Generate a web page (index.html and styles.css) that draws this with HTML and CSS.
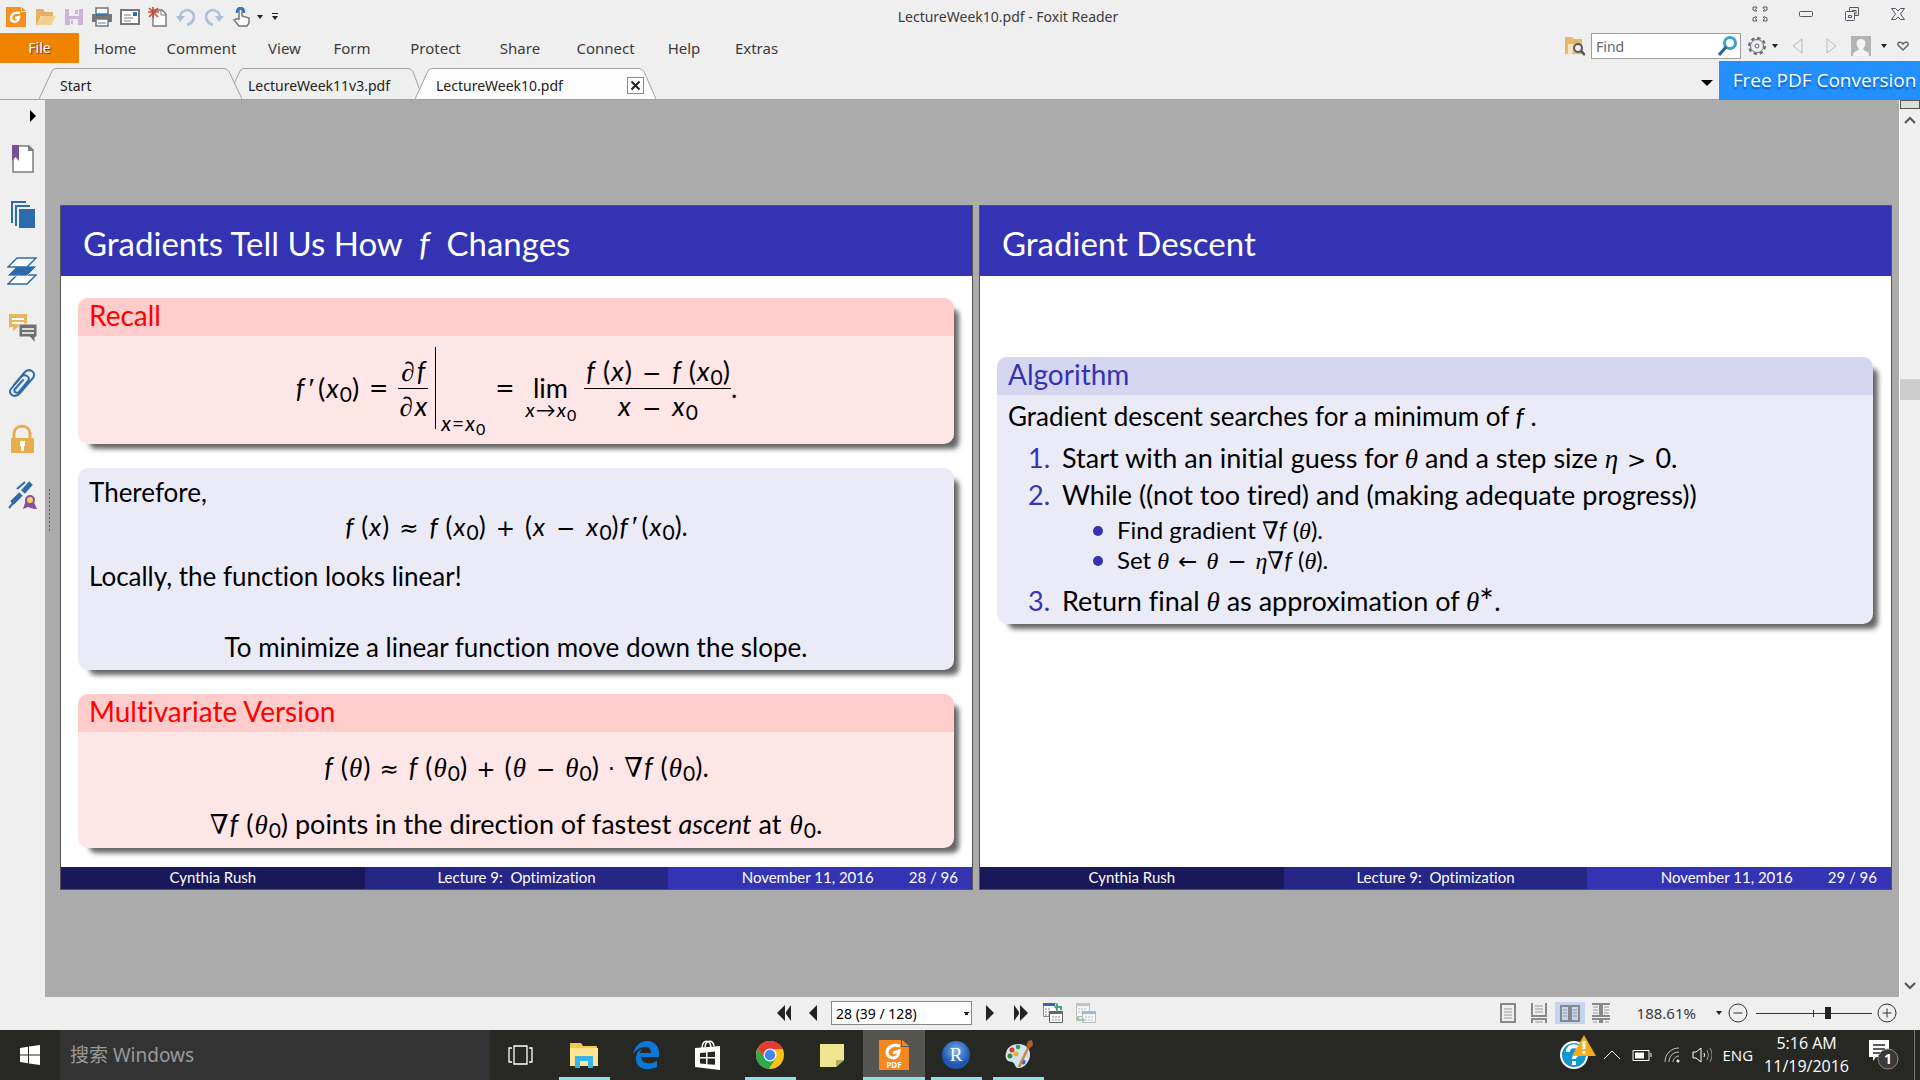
FILE: index.html
```html
<!DOCTYPE html>
<html lang="en">
<head>
<meta charset="utf-8">
<title>LectureWeek10.pdf - Foxit Reader</title>
<link rel="stylesheet" href="styles.css">
</head>
<body>
<div class="app">
  <header class="titlebar">
    <div class="quick">
      <svg class="ic20" viewBox="0 0 20 20"><path fill="#f78f1e" d="M0 0h15v5h5v15H0z"/><path fill="#f78f1e" d="M16 0l4 4h-4z"/><path d="M14 6c-4-1-8 0-9 4-1 5 5 6 7 3l1-3-4 1" fill="none" stroke="#fff" stroke-width="2.4"/></svg>
      <svg class="ic20" viewBox="0 0 20 20"><path fill="#e3b164" d="M0 2h7l2 3h8v4H5L1 18H0z"/><path fill="#f3cf8e" d="M6 9h14l-5 9H1z"/></svg>
      <svg class="ic20" viewBox="0 0 20 20"><path fill="#cbb5d6" d="M1 2h18v16H1z"/><path fill="#f0edf2" d="M5 2h10v7H5zM6 12h8v6H6z"/><path fill="#cbb5d6" d="M11 3h3v4h-3zM7 13h2v4H7z"/></svg>
      <svg class="ic20" viewBox="0 0 20 20"><path fill="#fff" stroke="#777" stroke-width="1.5" d="M4 1h12v6H4z"/><path fill="#777" d="M0 7h20v8H0z"/><path fill="#2f77b5" d="M4 7h12v2H4z"/><path fill="#fff" stroke="#777" stroke-width="1.5" d="M4 12h12v7H4z"/><path stroke="#4b8ac0" d="M6 16h8"/></svg>
      <svg class="ic20" viewBox="0 0 20 20"><path fill="#fff" stroke="#777" stroke-width="2" d="M1 3h18v14H1z"/><path stroke="#777" d="M4 8h7M4 11h9M4 14h7"/><path fill="#2f6fb0" d="M13 5h4v4h-4z"/></svg>
      <svg class="ic20" viewBox="0 0 20 20"><path fill="#fff" stroke="#777" stroke-width="1.4" d="M5 3h9l4 4v12H5z"/><path fill="none" stroke="#777" d="M13 3v5h5"/><path stroke="#cf4a36" stroke-width="1.6" d="M5 0v11M0 5h11M1 1l9 9M10 1l-9 9"/></svg>
      <svg class="ic20" viewBox="0 0 20 20"><path fill="none" stroke="#a8c1dc" stroke-width="2.6" d="M11 18c9-3 9-13 1-15-5 0-8 3-8 8"/><path fill="#a8c1dc" d="M0 9h9l-5 6z"/></svg>
      <svg class="ic20" viewBox="0 0 20 20"><path fill="none" stroke="#a8c1dc" stroke-width="2.6" d="M9 18C0 15 0 5 8 3c5 0 8 3 8 8"/><path fill="#a8c1dc" d="M11 9h9l-5 6z"/></svg>
      <svg class="ic20" viewBox="0 0 20 20"><path fill="#fff" stroke="#777" stroke-width="1.5" d="M7 12V3q1.500-2 3 0v6l7 2v5l-2 3H7l-5-6 2-1z"/><path fill="none" stroke="#2f77b5" stroke-width="2.500" d="M5 6q0-5 3.500-5T12 6"/></svg>
      <svg class="caret" viewBox="0 0 8 8"><path d="M1 2h6L4 6z"/></svg>
      <svg class="caret" viewBox="0 0 8 8"><path d="M1 0h6v1H1zM1 3h6L4 7z"/></svg>
    </div>
    <h1 class="wintitle">LectureWeek10.pdf - Foxit Reader</h1>
    <div class="winbtns">
      <button aria-label="Full screen"><svg viewBox="0 0 16 16"><path d="M1 1h4L3.500 3.500 5 5 3 5 1 4zM15 1h-4l1.500 2.500L11 5h2l2-1zM1 15h4l-1.500-2.500L5 11H3l-2 1zM15 15h-4l1.500-2.500L11 11h2l2 1z"/></svg></button>
      <button aria-label="Minimize"><svg viewBox="0 0 16 16"><rect x="1.500" y="5.500" width="13" height="5" rx="1"/></svg></button>
      <button aria-label="Restore"><svg viewBox="0 0 16 16"><path d="M5.500 5V1.500h9v8H11M8 4.500h4v4"/><rect x="1.500" y="5.500" width="9" height="9" rx="1"/><path d="M4.500 9.500h3v2h-3z"/></svg></button>
      <button aria-label="Close"><svg viewBox="0 0 16 16"><path d="M1.500 2.500h4L8 5l2.500-2.500h4L10.500 8l4 5.500h-4L8 11l-2.500 2.500h-4l4-5.500z"/></svg></button>
    </div>
  </header>

  <nav class="menubar">
    <div class="menus">
      <button class="file">File</button><button>Home</button><button>Comment</button><button>View</button><button>Form</button><button>Protect</button><button>Share</button><button>Connect</button><button>Help</button><button>Extras</button>
    </div>
    <div class="tools">
      <svg class="ic20" viewBox="0 0 20 20"><path fill="#ecb765" d="M0 1h7l2 2h8v15H0z"/><path fill="#fff" opacity=".6" d="M3 8h8L7 18H3z"/><circle cx="13" cy="12" r="4" fill="#eee" stroke="#555" stroke-width="2"/><path stroke="#555" stroke-width="2.500" d="M16 15l4 4"/></svg>
      <label class="find"><input type="text" placeholder="Find" aria-label="Find"><svg viewBox="0 0 20 20"><circle cx="12" cy="7" r="5.500" fill="#fff" stroke="#3fa0cd" stroke-width="3"/><path stroke="#2a5f9e" stroke-width="3" d="M8 11l-7 8"/></svg></label>
      <svg class="ic20" viewBox="0 0 20 20" fill="none" stroke="#667"><circle cx="10" cy="10" r="8" stroke-width="2" stroke-dasharray="3.500 2.780"/><circle cx="10" cy="10" r="6.500"/><circle cx="10" cy="10" r="2"/></svg>
      <svg class="caret" viewBox="0 0 8 8"><path d="M1 2h6L4 6z"/></svg>
      <svg class="tri" viewBox="0 0 12 18"><path d="M10 2v14L1 9z"/></svg>
      <svg class="tri next" viewBox="0 0 12 18"><path d="M2 2v14l9-7z"/></svg>
      <svg class="ic20" viewBox="0 0 20 20"><path fill="#b3b3b3" d="M0 0h20v20H0z"/><path fill="#f4f4f4" d="M10 3c6 0 5 7 2 10 1 2 5 2 6 5v2H2v-2c1-3 5-3 6-5-3-3-4-10 2-10z"/></svg>
      <svg class="caret user" viewBox="0 0 8 8"><path d="M1 2h6L4 6z"/></svg>
      <svg class="heart" viewBox="0 0 14 14"><path d="M7 11L2 6c-1-3 3-4 5-1 2-3 6-2 5 1z" fill="none" stroke="#667" stroke-width="1.500"/></svg>
    </div>
  </nav>

  <div class="tabbar">
    <button class="tab t1"><svg viewBox="0 0 203 31"><path d="M0 31L13 3q1-2.500 4-2.500h168q3 0 5 3L203 31"/></svg><span>Start</span></button>
    <button class="tab t2"><svg viewBox="0 0 196 31"><path d="M0 31L13 3q1-2.500 4-2.500h164q3 0 5 3L196 31"/></svg><span>LectureWeek11v3.pdf</span></button>
    <button class="tab t3"><svg viewBox="0 0 241 31"><path d="M0 31L13 3q1-2.500 4-2.500h207q3 0 5 3L241 31"/></svg><span>LectureWeek10.pdf</span><svg class="close" viewBox="0 0 17 17"><rect x=".5" y=".5" width="16" height="16" fill="#fff" stroke="#888"/><path d="M4.500 4.500l8 8M12.500 4.500l-8 8" stroke="#222" stroke-width="2"/></svg></button>
    <svg class="tabmenu" viewBox="0 0 12 8"><path d="M0 1h12L6 7z"/></svg>
    <a class="promo" href="#">Free PDF Conversion</a>
  </div>

  <main class="work">
    <aside class="side">
      <svg class="expand" viewBox="0 0 8 12"><path d="M1 0v12l6-6z"/></svg>
      <svg class="ic30" viewBox="0 0 30 30"><path fill="#fff" stroke="#7d7d7d" stroke-width="1.500" d="M6 2h16l4 4v22H6z"/><path fill="#7d7d7d" d="M21 1l6 6h-6z"/><path fill="#7b4f96" d="M5 1h7v16l-3.500-4L5 17z"/></svg>
      <svg class="ic30" viewBox="0 0 30 30"><path fill="#2c6cad" d="M4 1h15v2H6v20H4zM8 5h15v2H10v19H8zM12 9h16v19H12z"/></svg>
      <svg class="ic30" viewBox="0 0 30 30"><path fill="#fff" stroke="#2c6cad" stroke-width="1.500" d="M10 19h19l-9 9H1z"/><path fill="#2c6cad" stroke="#fff" stroke-width=".7" d="M10 10h20l-10 10H0z"/><path fill="#fff" stroke="#2c6cad" stroke-width="1.500" d="M10 2h19l-9 9H1z"/></svg>
      <svg class="ic30" viewBox="0 0 30 30"><path fill="#e9b55e" d="M2 2h18v13h-9l-5 4v-4H2z"/><path stroke="#fff" stroke-width="2" d="M5 7h12M5 11h12"/><path fill="#6f6f6f" stroke="#efefef" d="M12 12h18v13h-2v6l-5-6H12z"/><path stroke="#fff" stroke-width="1.500" d="M15 17h12M15 21h12"/></svg>
      <svg class="ic30" viewBox="0 0 30 30"><path fill="none" stroke="#2c6cad" stroke-width="2" stroke-linecap="round" d="M7 17L17 5c5-6 13-1 9 5L13 25c-5 6-13 1-9-4l10-12c4-4 10 0 7 4l-9 11c-3 2-6-1-4-3l8-9"/></svg>
      <svg class="ic30" viewBox="0 0 30 30"><path fill="none" stroke="#e8ad4f" stroke-width="3" d="M7 15V9c1-9 15-9 16 0v6"/><path fill="#e8ad4f" d="M4 14h23v15H4z"/><path fill="#fff" d="M13 17h5v5h-1v5h-3v-5h-1z"/></svg>
      <svg class="ic30" viewBox="0 0 30 30"><path stroke="#2c6cad" stroke-width="5" d="M5 23l9-9M16 12l8-9"/><path stroke="#2c6cad" stroke-width="2" d="M2 28l5-6M10 9l8-7"/><path fill="#8550a0" d="M19 20l-3 9 5-2 3 1 3 1h3l-4-9z"/><circle cx="23" cy="20" r="4" fill="#f7d154" stroke="#8550a0" stroke-width="2"/></svg>
    </aside>
    <div class="grip"></div>
    <section class="canvas">
      <article class="slide">
        <h2 class="slide-title">Gradients Tell Us How&nbsp; <i>f</i>&nbsp; Changes</h2>
        <div class="slide-body">
          <section class="block red">
            <h3>Recall</h3>
            <div class="limit">
              <span><i>f</i><span class="p">′</span>(<i>x</i><sub>0</sub>)</span>
              <span class="op">=</span>
              <span class="frac"><span><i class="g">∂</i><i>f</i></span><span><i class="g">∂</i><i>x</i></span></span>
              <span class="evalbar"></span><span class="evalat"><i>x</i>=<i>x</i><sub>0</sub></span>
              <span class="op">=</span>
              <span class="lim"><span>lim</span><small><i>x</i>→<i>x</i><sub>0</sub></small></span>
              <span class="frac"><span><i>f</i> (<i>x</i>)<b class="op">−</b><i>f</i> (<i>x</i><sub>0</sub>)</span><span><i>x</i><b class="op">−</b><i>x</i><sub>0</sub></span></span>
              <span>.</span>
            </div>
          </section>
          <section class="block blue plain">
            <p>Therefore,</p>
            <p class="mid"><i>f</i> (<i>x</i>)<b class="op">≈</b><i>f</i> (<i>x</i><sub>0</sub>)<b class="op">+</b>(<i>x</i><b class="op">−</b><i>x</i><sub>0</sub>)<i>f</i><span class="p">′</span>(<i>x</i><sub>0</sub>).</p>
            <p class="local">Locally, the function looks linear!</p>
            <p class="mid slope">To minimize a linear function move down the slope.</p>
          </section>
          <section class="block red multi">
            <h3>Multivariate Version</h3>
            <p class="mid"><i>f</i> (<i class="g">θ</i>)<b class="op">≈</b><i>f</i> (<i class="g">θ</i><sub>0</sub>)<b class="op">+</b>(<i class="g">θ</i><b class="op">−</b><i class="g">θ</i><sub>0</sub>)<b class="op dot">·</b><b class="n">∇</b><i>f</i> (<i class="g">θ</i><sub>0</sub>).</p>
            <p class="mid"><b class="n">∇</b><i>f</i> (<i class="g">θ</i><sub>0</sub>) points in the direction of fastest <em>ascent</em> at <i class="g">θ</i><sub>0</sub>.</p>
          </section>
        </div>
        <footer><span>Cynthia Rush</span><span>Lecture 9:&nbsp; Optimization</span><span class="last"><span>November 11, 2016</span><span>28 / 96</span></span></footer>
      </article>
      <article class="slide">
        <h2 class="slide-title">Gradient Descent</h2>
        <div class="slide-body second">
          <section class="block blue algo">
            <h3>Algorithm</h3>
            <p>Gradient descent searches for a minimum of <i>f</i> .</p>
            <ol>
              <li>Start with an initial guess for <i class="g">θ</i> and a step size <i class="g">η</i><b class="op">&gt;</b>0.</li>
              <li>While ((not too tired) and (making adequate progress))
                <ul>
                  <li>Find gradient <b class="n">∇</b><i>f</i> (<i class="g">θ</i>).</li>
                  <li>Set <i class="g">θ</i><b class="op">←</b><i class="g">θ</i><b class="op">−</b><i class="g">η</i><b class="n">∇</b><i>f</i> (<i class="g">θ</i>).</li>
                </ul>
              </li>
              <li>Return final <i class="g">θ</i> as approximation of <i class="g">θ</i><sup>∗</sup>.</li>
            </ol>
          </section>
        </div>
        <footer><span>Cynthia Rush</span><span>Lecture 9:&nbsp; Optimization</span><span class="last"><span>November 11, 2016</span><span>29 / 96</span></span></footer>
      </article>
    </section>
    <div class="scroll">
      <span class="split"></span>
      <svg viewBox="0 0 12 8"><path d="M1 7l5-5 5 5"/></svg>
      <div class="track"><span class="thumb"></span></div>
      <svg viewBox="0 0 12 8"><path d="M1 1l5 5 5-5"/></svg>
    </div>
  </main>

  <div class="status">
    <div class="pager">
      <svg class="w16" viewBox="0 0 16 16"><path d="M9 0v16L1 8zM15 0v16L10 9V7z"/></svg>
      <svg class="w10" viewBox="0 0 10 16"><path d="M9 0v16L1 8z"/></svg>
      <select aria-label="Page"><option>28 (39 / 128)</option></select>
      <svg class="w10" viewBox="0 0 10 16"><path d="M1 0v16l8-8z"/></svg>
      <svg class="w16" viewBox="0 0 16 16"><path d="M1 0v16l5-7V7zM7 0v16l8-8z"/></svg>
      <svg class="ic20" viewBox="0 0 20 20"><path fill="#fff" stroke="#888" d="M.5.500h13v13H.5z"/><path fill="#2c6cad" d="M0 0h12v3H0z"/><path stroke="#888" stroke-dasharray="2 1" d="M2 6h6M2 9h5M2 12h4"/><path fill="#fff" stroke="#666" d="M6.500 8.500h13v11h-13z"/><path fill="#666" d="M6 8h14v3H6z"/><path stroke="#888" stroke-dasharray="2 1" d="M9 14h9M9 17h9"/><path fill="#44a57c" d="M11 4l4-4v3h4v4h-2V5h-2v3z"/></svg>
      <svg class="ic20 dim" viewBox="0 0 20 20"><path fill="#fff" stroke="#888" d="M.5.500h13v13H.5z"/><path fill="#999" d="M0 0h14v3H0z"/><path stroke="#888" stroke-dasharray="2 1" d="M2 6h9M2 9h5"/><path fill="#fff" stroke="#888" d="M6.500 8.500h13v11h-13z"/><path fill="#4b86c4" d="M6 8h14v3H6z"/><path stroke="#888" stroke-dasharray="2 1" d="M9 14h9M9 17h9"/><path fill="#44a57c" d="M0 14h3v2h3v-3l3 4-3 3v-2H0z"/></svg>
    </div>
    <div class="view">
      <button aria-label="Single page"><svg viewBox="0 0 20 20"><path d="M3 1h14v18H3z"/><path class="ln" d="M6 6h8M6 9h8M6 12h8M6 15h8"/></svg></button>
      <button aria-label="Continuous"><svg viewBox="0 0 20 20"><path d="M3 0v13h14V0M3 20v-4h14v4"/><path class="ln" d="M6 3h8M6 6h8M6 9h8M6 19h8"/></svg></button>
      <button class="on" aria-label="Facing"><svg viewBox="0 0 20 20"><path d="M1 3h8v15H1zM11 3h8v15h-8z"/><path class="ln" d="M3 7h4M3 10h4M3 13h4M13 7h4M13 10h4M13 13h4"/></svg></button>
      <button aria-label="Continuous facing"><svg viewBox="0 0 20 20"><path d="M1 1h8v12H1M19 1h-8v12h8M1 16h8v4M19 16h-8v4"/><path class="ln" d="M2 4h5M2 7h5M2 10h5M13 4h5M13 7h5M13 10h5M2 19h4M14 19h4"/></svg></button>
      <output class="pct">188.61%</output>
      <svg class="caret" viewBox="0 0 8 8"><path d="M1 2h6L4 6z"/></svg>
      <button class="round" aria-label="Zoom out"><svg viewBox="0 0 20 20"><circle cx="10" cy="10" r="9"/><path d="M5.500 10h9"/></svg></button>
      <input class="zoom" type="range" min="0" max="100" value="63" aria-label="Zoom">
      <button class="round" aria-label="Zoom in"><svg viewBox="0 0 20 20"><circle cx="10" cy="10" r="9"/><path d="M5.500 10h9M10 5.500v9"/></svg></button>
    </div>
  </div>

  <div class="taskbar">
    <button class="start" aria-label="Start"><svg viewBox="0 0 20 20"><path fill="#fff" d="M0 3l8-1.200V9.500H0zM9 1.600L20 0v9.500H9zM0 10.500h8v7.700L0 17zM9 10.500h11V20L9 18.400z"/></svg></button>
    <input class="search" type="text" placeholder="搜索 Windows" aria-label="Search">
    <div class="apps">
      <button aria-label="Task view"><svg viewBox="0 0 30 30" fill="none" stroke="#fff" stroke-width="1.300"><path d="M7 6h13v18H7zM5 8H2v14h3M22 8h3v14h-3"/></svg></button>
      <button class="run" aria-label="File Explorer"><svg viewBox="0 0 30 30"><path fill="#f4c84a" d="M1 3h11l2 3h14v20H1z"/><path fill="#ffe592" d="M1 8h28v18H1z"/><path fill="#37b3e6" d="M6 28V16h18v12h-5v-7h-8v7z"/></svg></button>
      <button aria-label="Edge"><svg viewBox="0 0 30 30"><path fill="#0a78d6" d="M2 14C4 5 10 1 16 1c8 0 12 6 12 12v4H10c1 7 9 8 16 4v6C15 32 4 28 5 18c0-5 3-8 6-9-1 1-2 3-2 4h11C20 4 9 5 2 14z"/></svg></button>
      <button aria-label="Store"><svg viewBox="0 0 30 30"><path fill="none" stroke="#fff" stroke-width="1.500" d="M9 9c0-10 8-10 9-2M12 7c1-8 8-7 9-1"/><path fill="#fff" d="M2 8l25-2v24L2 27z"/><path fill="#272824" d="M7 13l6-.6V17H7zM14.500 12.200L22 11.500V17h-7.500zM7 18.500h6V24l-6-.5zM14.500 18.500H22v6.300l-7.500-.6z"/></svg></button>
      <button class="run" aria-label="Chrome"><svg viewBox="0 0 30 30"><circle cx="15" cy="15" r="14" fill="#fbc116"/><path fill="#e33b2e" d="M15 15L2.900 8A14 14 0 0 1 27 8l-12 1z"/><path fill="#2da94f" d="M2.900 8a14 14 0 0 0 11 21l7-11-6-1-6 1z"/><path fill="#e33b2e" d="M15 9h12.600A14 14 0 0 0 2.900 8l6 10z"/><circle cx="15" cy="15" r="6.500" fill="#fff"/><circle cx="15" cy="15" r="5.200" fill="#4285f4"/></svg></button>
      <button aria-label="Sticky Notes"><svg viewBox="0 0 30 30"><path fill="#efe48f" d="M3 4h24v16l-8 7H3z"/><path fill="#b5aa5b" d="M19 27v-7h8z"/></svg></button>
      <button class="run active" aria-label="Foxit Reader"><svg viewBox="0 0 30 30"><path fill="#f6881f" d="M0 0h22v7h8v23H0z"/><path fill="#f6881f" d="M23 0l7 6h-7z"/><path fill="none" stroke="#fff" stroke-width="3" d="M21 6c-6-2-12 0-13 6 0 6 8 8 11 3l1-4-6 2"/><text x="15" y="28" text-anchor="middle" class="pdf">PDF</text></svg></button>
      <button class="run" aria-label="R"><svg viewBox="0 0 30 30"><defs><radialGradient id="rg" cx=".5" cy=".35"><stop offset="0" stop-color="#7db2ee"/><stop offset="1" stop-color="#1d57b0"/></radialGradient></defs><circle cx="15" cy="15" r="14" fill="url(#rg)"/><text x="15" y="21" text-anchor="middle" class="rr">R</text></svg></button>
      <button class="run" aria-label="Paint"><svg viewBox="0 0 30 30"><path fill="#cfe4f0" d="M4 10C8 3 20 2 25 8c5 7 0 18-8 20-6 1-4-5-8-6-6 0-8-5-5-12z"/><circle cx="9" cy="10" r="2.500" fill="#d0392b"/><circle cx="15" cy="7" r="2.300" fill="#3e9b44"/><circle cx="7" cy="16" r="2.500" fill="#2f8b3a"/><circle cx="13" cy="14" r="2.500" fill="#e6b422"/><circle cx="20" cy="22" r="2.500" fill="#2e6fc4"/><path stroke="#c98443" stroke-width="2.500" d="M16 27l9-19"/><path fill="#a5622c" d="M23 7l2-6 4-1 1 5-4 4z"/></svg></button>
    </div>
    <div class="tray">
      <svg class="help" viewBox="0 0 36 36"><circle cx="14" cy="21" r="13" fill="#1295d3" stroke="#fff" stroke-width="2"/><path fill="none" stroke="#fff" stroke-width="4" d="M8 18c0-8 12-7 12-1 0 4-6 3-6 8M14 27v4"/><path fill="#f5ab1b" d="M24 1l12 21H12z"/><path stroke="#fff" stroke-width="3" d="M24 7v8M24 17v3"/></svg>
      <svg class="t18" viewBox="0 0 18 18"><path d="M1 13l8-8 8 8"/></svg>
      <svg class="t20" viewBox="0 0 20 18"><path d="M1 4.500h16v10H1zM19 7v4"/><path fill="#fff" stroke="none" d="M3 6.500h9v6H3z"/></svg>
      <svg class="t18" viewBox="0 0 18 18"><path d="M2 16C2 8 8 2 16 2M6 16c0-6 4-10 10-10M10 16c0-3 3-6 6-6" opacity=".7"/><circle cx="15" cy="15" r="1.500" fill="#fff" stroke="none"/></svg>
      <svg class="t20" viewBox="0 0 20 18"><path d="M1 6h3l5-4v14l-5-4H1z"/><path d="M12 7q1 2 0 4"/><path opacity=".5" d="M15 4q3 5 0 10M18 2q4 7 0 14"/></svg>
      <span class="lang">ENG</span>
      <time class="clock"><span>5:16 AM</span><span>11/19/2016</span></time>
      <svg class="note" viewBox="0 0 32 32"><path fill="#fff" d="M1 1h20v17H8l-3 4v-4H1z"/><path stroke="#272824" stroke-width="1.500" d="M5 6h12M5 10h12M5 14h8"/><circle cx="20" cy="20" r="10" fill="#3a3b38" stroke="#888"/><text x="20" y="25" text-anchor="middle" class="one">1</text></svg>
      <span class="peek"></span>
    </div>
  </div>
</div>
</body>
</html>
```
FILE: styles.css
```css
* { box-sizing: border-box; margin: 0; padding: 0; }
body { font-family: "Noto Sans", "Noto Sans CJK SC", sans-serif; font-size: 15px; color: #3b3b3b; background: #efefef; }
button { font: inherit; color: inherit; background: none; border: 0; }
svg { display: block; flex: none; }
.app { min-height: 100vh; display: grid; grid-template-rows: 33px 28px 39px 1fr 33px 50px; }
.ic20 { width: 20px; height: 20px; }
.ic30 { width: 30px; height: 30px; }
.caret { width: 8px; height: 8px; fill: #222; }

.titlebar { display: grid; grid-template-columns: 1fr auto 1fr; align-items: center; padding: 0 14px 6px 6px; }
.quick { display: flex; gap: 8px; align-items: center; padding-top: 7px; }
.quick .ic20:first-child { margin-right: 2px; }
.quick .caret { margin-left: -4px; }
.quick .caret + .caret { margin-left: -1px; }
.wintitle { font-size: 14px; line-height: 20px; font-weight: 400; padding: 6px 0 0 104px; }
.winbtns { display: flex; gap: 30px; justify-content: flex-end; }
.winbtns svg { width: 16px; height: 16px; fill: none; stroke: #556; stroke-width: 1; }

.menubar { display: flex; justify-content: space-between; }
.menus { display: grid; grid-template-columns: 79px 72px 101px 65px 70px 97px 72px 99px 58px 87px; line-height: 30px; }
.file { background: #f08300; color: #fff; font-size: 14px; line-height: 28px; text-shadow: 1px 1px 1px #633; }
.tools { display: flex; align-items: center; gap: 6px; padding: 0 10px 2px 0; }
.tools .caret { margin: 0 3px 0 -2px; }
.tools .user { margin: 0 0 0 3px; }
.find { display: flex; align-items: center; width: 150px; height: 26px; border: 1px solid #a0a0a0; background: #fff; padding: 0 2px 0 4px; }
.find input { flex: 1; min-width: 0; border: 0; font: inherit; font-size: 14px; background: none; }
.find svg { width: 20px; height: 20px; }
.find input::placeholder { color: #666; opacity: 1; }
.tri { width: 12px; height: 18px; fill: none; stroke: #bbb; margin-left: 4px; }
.next { margin: 0 8px 0 15px; }
.heart { width: 14px; height: 14px; margin-left: 2px; }

.tabbar { display: flex; align-items: flex-end; border-bottom: 1px solid #a0a0a0; padding-left: 39px; color: #222; }
.tab { position: relative; height: 31px; display: flex; align-items: center; font-size: 14px; text-align: left; padding-left: 21px; }
.tab span { position: relative; padding-top: 3px; }
.tab svg:first-child { position: absolute; inset: 0; width: 100%; height: 100%; fill: #efefef; stroke: #a0a0a0; }
.t1 { width: 203px; z-index: 2; }
.t2 { width: 196px; margin-left: -15px; z-index: 1; }
.t3 { width: 241px; margin-left: -8px; z-index: 3; }
.tab.t3 svg:first-child { fill: #fdfdfd; }
.close { position: relative; width: 17px; height: 17px; margin: 3px 12px 0 auto; }
.tabmenu { width: 12px; height: 8px; margin: 0 6px 12px auto; }
.promo { align-self: stretch; width: 201px; background: #2490ff; color: #fff; font-family: "Open Sans", sans-serif; font-size: 19px; line-height: 39px; text-align: center; text-decoration: none; white-space: nowrap; text-shadow: 0 2px 2px #05a; padding-left: 10px; margin-bottom: -1px; }

.work { display: flex; background: #ababab; position: relative; }
.side { width: 45px; background: #efefef; display: flex; flex-direction: column; align-items: center; gap: 26px; padding: 10px 2px 0 0; }
.expand { width: 8px; height: 12px; margin: 0 0 -4px 22px; }
.grip { width: 4px; height: 44px; margin: 388px 0 0 3px; background: radial-gradient(circle, #666 1px, transparent 1px) 0 0 / 3px 4px; }
.canvas { flex: 1; display: flex; align-items: center; gap: 6px; padding: 0 7px 2px 8px; }
.scroll { width: 21px; background: #efefef; border-left: 1px solid #fff; display: flex; flex-direction: column; align-items: center; }
.scroll svg { width: 12px; height: 8px; fill: none; stroke: #555; stroke-width: 2; margin: 7px 0; }
.split { align-self: stretch; height: 9px; border: 1px solid #555; background: #ddd; }
.track { flex: 1; align-self: stretch; padding-top: 248px; }
.thumb { display: block; height: 21px; background: #cdcdcd; }

.slide { flex: 1; aspect-ratio: 4 / 3; background: #fff; border: 1px solid #555; display: flex; flex-direction: column; font-family: Lato, "Noto Sans", sans-serif; font-size: 27px; line-height: 34px; font-variant-ligatures: none; color: #000; white-space: nowrap; }
.slide-title { background: #3333b3; color: #fff; font-weight: 400; font-size: 33px; line-height: 66px; padding: 4px 0 0 22px; }
.slide-body { flex: 1; padding: 22px 18px 0 17px; display: flex; flex-direction: column; gap: 24px; }
.second { padding-top: 81px; }
.block { border-radius: 10px; box-shadow: 8px 8px 5px -3px #666; }
.block h3 { font-size: 28px; line-height: 35px; font-weight: 400; padding: 0 11px 3px; border-radius: 10px 10px 0 0; }
.block p { padding: 0 11px; }
.plain, .algo > p { font-size: 26px; }
.red { background: #ffe6e6; }
.red h3 { background: #ffcccc; color: #f00; }
.blue { background: #ebebf7; }
.blue h3 { background: #d6d6f0; color: #3333b3; }
.block .mid { text-align: center; padding: 0; }
.plain { padding: 7px 0 6px; }
.local { margin-top: 16px; }
.slope { margin-top: 37px; }
.multi { padding-bottom: 7px; }
.multi .mid { margin-top: 18px; }
.multi .mid + .mid { margin-top: 23px; }
.algo h3 { margin-bottom: 4px; }
.algo { padding-bottom: 6px; }

.mid i, .frac i, .limit i { margin: 0 1px; }
sub { font-size: 21px; line-height: 1px; vertical-align: -4px; }
sup { font-size: 18px; line-height: 1px; vertical-align: 12px; }
.g { font-family: "Liberation Serif", serif; line-height: 1px; }
.n { font-family: "DejaVu Serif", serif; font-weight: 400; line-height: 1px; }
.p { font-family: "Liberation Serif", serif; font-size: 30px; line-height: 1px; margin: 0 3px; }
.op { font-family: "DejaVu Sans", sans-serif; font-weight: 400; font-size: 23px; line-height: 1px; margin: 0 10px; }
li .op { margin: 0 9px; }
.dot { margin: 0 8px; }
.multi .op { margin: 0 9px; }
.limit { display: flex; align-items: center; justify-content: center; height: 108px; padding-bottom: 4px; }
.frac { display: flex; flex-direction: column; text-align: center; line-height: 34px; }
.frac > :first-child { border-bottom: 1px solid #000; padding: 0 1px; }
.evalbar { width: 1px; height: 82px; background: #000; margin: 0 4px 0 7px; }
.evalat { align-self: flex-end; font-size: 21px; line-height: 28px; margin-bottom: 3px; }
.evalat sub, .lim sub { font-size: 16px; }
.lim { display: flex; flex-direction: column; align-items: center; padding: 16px 8px 0 0; line-height: 26px; }
.lim small { font-size: 20px; line-height: 16px; }

ol { list-style: none; counter-reset: n; margin-top: 8px; }
ol > li { counter-increment: n; padding-left: 65px; margin-bottom: 3px; }
ol > li::before { content: counter(n) "."; color: #3333b3; display: inline-block; width: 34px; margin-left: -34px; }
ul { list-style: none; margin: 3px 0 9px; font-size: 24px; line-height: 30px; }
ul li { padding-left: 55px; }
ul li::before { content: ""; display: inline-block; width: 10px; height: 10px; border-radius: 5px; background: #3333b3; margin: 0 14px 3px -24px; }
ol > li:last-child { margin-bottom: 0; }

footer { display: grid; grid-template-columns: 1fr 1fr 1fr; height: 22px; font-size: 15px; line-height: 20px; text-align: center; color: #fff; background: #3333b3; }
footer > :first-child { background: #191959; }
footer > :nth-child(2) { background: #262686; }
.last { display: flex; justify-content: flex-end; gap: 35px; padding-right: 14px; }

.status { display: grid; grid-template-columns: 1fr auto 1fr; align-items: center; padding: 0 48px 1px 0; }
.pager { grid-column: 2; display: flex; align-items: center; gap: 13px; }
.w16 { width: 16px; height: 16px; }
.w10 { width: 10px; height: 16px; }
.w16, .w10 { fill: #222; }
.w16:first-child { margin-right: 3px; }
.pager .w10 + .w16 { margin: 0 1px 0 5px; }
.pager select { width: 141px; height: 24px; border: 1px solid #888; font: inherit; font-size: 14px; color: #000; appearance: none; padding: 0 4px; background: linear-gradient(#222, #222) 132px 10px / 5px 1px no-repeat, linear-gradient(#222, #222) 133px 11px / 3px 2px no-repeat, #fff; }
.dim { opacity: .5; }
.view { display: flex; align-items: center; justify-content: flex-end; margin-right: -25px; }
.view button { width: 30px; height: 22px; display: grid; place-items: center; margin-right: 1px; }
.view button svg { width: 20px; height: 20px; fill: none; stroke: #888; stroke-width: 2; }
.view button .ln { stroke: #999; stroke-width: 1; }
.view .on { background: #c3d5f2; }
.pct { font-size: 15px; padding: 0 19px 0 20px; }
.view .round { width: 20px; margin: 0 0 0 5px; }
.view .round svg { stroke: #333; stroke-width: 1; }
.zoom { appearance: none; width: 116px; height: 20px; margin: 0 0 0 8px; background: linear-gradient(#333, #333) 0 10px / 116px 1px no-repeat, linear-gradient(#333, #333) 57px 7px / 1px 7px no-repeat; }
.zoom::-webkit-slider-thumb { appearance: none; width: 6px; height: 12px; background: #222; }

.taskbar { background: #272824; color: #fff; display: flex; }
.start { width: 60px; padding-left: 20px; }
.start svg { width: 20px; height: 20px; }
.search { width: 430px; border: 0; background: #333; font: inherit; font-size: 19px; padding: 0 10px; }
.search::placeholder { color: #9a9a9a; opacity: 1; }
.apps { display: flex; padding-left: 1px; }
.apps button { width: 62px; padding: 0 5px; }
.apps svg { width: 30px; height: 30px; margin: 0 auto; }
.run { background: linear-gradient(#8be3ea, #8be3ea) 50% 100% / 51px 3px no-repeat; }
.apps .active { background: linear-gradient(#8be3ea, #8be3ea) 50% 100% / 62px 3px no-repeat, #555651; }
.pdf { font-size: 8px; font-weight: 700; fill: #fff; }
.rr { font-family: "Liberation Serif", serif; font-size: 19px; fill: #fff; }
.tray { margin-left: auto; display: flex; align-items: center; gap: 11px; }
.help { width: 36px; height: 36px; margin: 0 -4px 6px 0; }
.t18 { width: 18px; height: 18px; }
.t20 { width: 20px; height: 18px; }
.t18, .t20 { fill: none; stroke: #fff; stroke-width: 1; }
.lang { font-family: "Open Sans", sans-serif; font-size: 15px; }
.clock { font-family: "Open Sans", sans-serif; display: grid; text-align: center; font-size: 16px; line-height: 23px; }
.note { width: 32px; height: 32px; margin-left: 8px; }
.one { font-size: 14px; font-weight: 700; fill: #fff; }
.peek { width: 1px; align-self: stretch; background: #777; margin: 0 5px 0 3px; }
```
